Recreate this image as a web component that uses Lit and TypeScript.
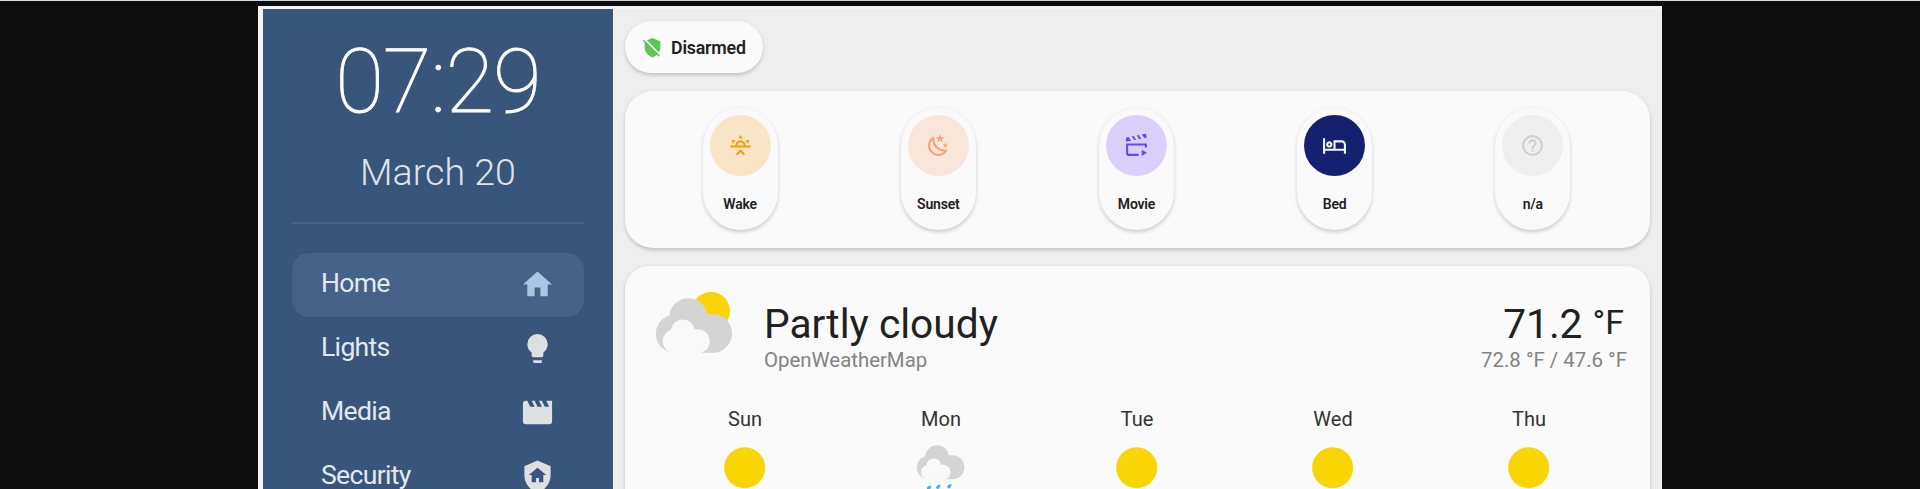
import { LitElement, html, css, svg } from "lit";
import { customElement } from "lit/decorators.js";

const ICONS: Record<string, string> = {
  home: "M10,20V14H14V20H19V12H22L12,3L2,12H5V20H10Z",
  bulb: "M12,2A7,7 0 0,0 5,9C5,11.38 6.19,13.47 8,14.74V17A1,1 0 0,0 9,18H15A1,1 0 0,0 16,17V14.74C17.81,13.47 19,11.38 19,9A7,7 0 0,0 12,2M9,21A1,1 0 0,0 10,22H14A1,1 0 0,0 15,21V20H9V21Z",
  movie: "M18,4L20,8H17L15,4H13L15,8H12L10,4H8L10,8H7L5,4H4A2,2 0 0,0 2,6V18A2,2 0 0,0 4,20H20A2,2 0 0,0 22,18V4H18Z",
  shieldHome: "M11,13H13V16H16V11H18L12,6L6,11H8V16H11V13M12,1L21,5V11C21,16.55 17.16,21.74 12,23C6.84,21.74 3,16.55 3,11V5L12,1Z",
  shieldOff: "M1,4.27L2.28,3L20.5,21.22L19.23,22.5L17,20.25C15.57,21.57 13.87,22.54 12,23C6.84,21.74 3,16.55 3,11V6.27L1,4.27M12,1L21,5V11C21,13.28 20.35,15.5 19.23,17.41L5.65,3.82L12,1Z",
  sunrise: "M3,12H7A5,5 0 0,1 12,7A5,5 0 0,1 17,12H21A1,1 0 0,1 22,13A1,1 0 0,1 21,14H3A1,1 0 0,1 2,13A1,1 0 0,1 3,12M15,12A3,3 0 0,0 12,9A3,3 0 0,0 9,12H15M12,2L14.39,5.42C13.65,5.15 12.84,5 12,5C11.16,5 10.35,5.15 9.61,5.42L12,2M3.34,7L7.5,6.65C6.9,7.16 6.36,7.78 5.94,8.5C5.5,9.24 5.25,10 5.11,10.79L3.34,7M20.65,7L18.88,10.79C18.74,10 18.47,9.23 18.05,8.5C17.63,7.78 17.1,7.15 16.5,6.64L20.65,7M12.71,16.3L15.82,19.41C16.21,19.8 16.21,20.43 15.82,20.82C15.43,21.21 14.8,21.21 14.41,20.82L12,18.41L9.59,20.82C9.2,21.21 8.57,21.21 8.18,20.82C7.79,20.43 7.79,19.8 8.18,19.41L11.29,16.3C11.5,16.1 11.74,16 12,16C12.26,16 12.5,16.1 12.71,16.3Z",
  night: "M17.75,4.09L15.22,6.03L16.13,9.09L13.5,7.28L10.87,9.09L11.78,6.03L9.25,4.09L12.44,4L13.5,1L14.56,4L17.75,4.09M21.25,11L19.61,12.25L20.2,14.23L18.5,13.06L16.8,14.23L17.39,12.25L15.75,11L17.81,10.95L18.5,9L19.19,10.95L21.25,11M18.97,15.95C19.8,15.87 20.69,17.05 20.16,17.8C19.84,18.25 19.5,18.67 19.08,19.07C15.17,23 8.84,23 4.94,19.07C1.03,15.17 1.03,8.83 4.94,4.93C5.34,4.53 5.76,4.17 6.21,3.85C6.96,3.32 8.14,4.21 8.06,5.04C7.79,7.9 8.75,10.87 10.95,13.06C13.14,15.26 16.1,16.22 18.97,15.95M17.33,17.97C14.5,17.81 11.7,16.64 9.53,14.5C7.36,12.31 6.2,9.5 6.04,6.68C3.23,9.82 3.34,14.64 6.35,17.66C9.37,20.67 14.19,20.78 17.33,17.97Z",
  moviePlay: "M2.2,8.3L1.8,6.4A2,2 0 0,1 3.4,4.1L4.4,3.9L6.8,7.4L2.2,8.3M7.3,3.3L9.3,2.9L11.7,6.4L9.8,6.8L7.3,3.3M12.2,2.4L14.2,2L16.6,5.5L14.7,5.9L12.2,2.4M17.1,1.4L21,0.6L21.9,4.5L19.6,4.9L17.1,1.4M2,10H22V14H20V12H4V20H14V22H4A2,2 0 0,1 2,20V10M17,16V22L22,19L17,16Z",
  bed: "M7 14C8.66 14 10 12.66 10 11C10 9.34 8.66 8 7 8C5.34 8 4 9.34 4 11C4 12.66 5.34 14 7 14M7 10C7.55 10 8 10.45 8 11C8 11.55 7.55 12 7 12C6.45 12 6 11.55 6 11C6 10.45 6.45 10 7 10M19 7H11V15H3V5H1V20H3V17H21V20H23V11C23 8.79 21.21 7 19 7M21 15H13V9H19C20.1 9 21 9.9 21 11Z",
  help: "M11,18H13V16H11V18M12,2A10,10 0 0,0 2,12A10,10 0 0,0 12,22A10,10 0 0,0 22,12A10,10 0 0,0 12,2M12,20C7.59,20 4,16.41 4,12C4,7.59 7.59,4 12,4C16.41,4 20,7.59 20,12C20,16.41 16.41,20 12,20M12,6A4,4 0 0,0 8,10H10A2,2 0 0,1 12,8A2,2 0 0,1 14,10C14,12 11,11.75 11,15H13C13,12.75 16,12.5 16,10A4,4 0 0,0 12,6Z",
};

const icon = (name: string) =>
  html`<svg class="icon" viewBox="0 0 24 24"><path d=${ICONS[name]} fill="currentColor"></path></svg>`;

const clouds = svg`
  <path class="cloud-back" d="m3.8863 5.035c-0.54892 0.16898-1.04 0.46637-1.4372 0.8636-0.63077 0.63041-1.0206 1.4933-1.0206 2.455 0 1.9251 1.5589 3.4682 3.4837 3.4682h6.9688c1.9251 0 3.484-1.5981 3.484-3.5232 0-1.9251-1.5589-3.5232-3.484-3.5232h-1.0834c-0.25294-1.6916-1.6986-2.9083-3.4463-2.9083-1.7995 0-3.2805 1.4153-3.465 3.1679"></path>
  <path class="cloud-front" d="m4.1996 7.6995c-0.33902 0.10407-0.64276 0.28787-0.88794 0.5334-0.39017 0.38982-0.63147 0.92322-0.63147 1.5176 0 1.1896 0.96414 2.1431 2.1537 2.1431h4.3071c1.1896 0 2.153-0.98742 2.153-2.1777 0-1.1896-0.96344-2.1777-2.153-2.1777h-0.66992c-0.15593-1.0449-1.0499-1.7974-2.1297-1.7974-1.112 0-2.0274 0.87524-2.1417 1.9586"></path>`;

const drop = (x: number, y: number) => svg`
  <path class="rain" transform="translate(${x} ${y})" d="m0 0c-0.22401 0.24765-0.57115 0.2988-0.77505 0.11395-0.20391-0.1845-0.18732-0.53481 0.036689-0.78281 0.14817-0.16298 0.59126-0.32914 0.87559-0.42369 0.12453-0.04092 0.22684 0.05186 0.19791 0.17956-0.065617 0.2921-0.18732 0.74965-0.33514 0.91299"></path>`;

const weather = (kind: string) => html`<svg class="sky" viewBox="0 0 17 17">
  ${kind === "sunny" ? svg`<circle class="sun" cx="8.4" cy="8.4" r="6"></circle>` : ""}
  ${kind === "partly" ? svg`<circle class="sun" cx="11.497" cy="4.211" r="3.484"></circle>${clouds}` : ""}
  ${kind === "rainy" ? svg`${clouds}${drop(5.29, 14.73)}${drop(7.99, 14.42)}${drop(11.26, 14.26)}${drop(8.43, 15.88)}` : ""}
</svg>`;

@customElement("app-root")
export class AppRoot extends LitElement {
  static styles = css`
    :host {
      display: block;
      height: 489px;
      overflow: hidden;
      box-sizing: border-box;
      background: #0d0d0d;
      border-top: 1px solid #d5dbd8;
      padding-top: 5px;
      font-family: Roboto, sans-serif;
      color: #212121;
    }
    * { box-sizing: border-box; }
    .icon { display: block; width: 100%; height: 100%; }
    .frame {
      width: 1404px;
      height: 600px;
      margin-left: 258px;
      display: flex;
      background: #eee;
      border: solid #f4f4f4;
      border-width: 3px 0 0 5px;
    }
    .side {
      flex: 0 0 350px;
      background: #38557c;
      padding: 0 29px;
      color: #fff;
      display: flex;
      flex-direction: column;
    }
    .time {
      font-size: 89px;
      font-weight: 100;
      line-height: 100px;
      margin-top: 23px;
      text-align: center;
      letter-spacing: -1px;
      -webkit-text-stroke: 0.8px #fff;
    }
    .date {
      font-size: 37.6px;
      font-weight: 300;
      line-height: 48px;
      margin-top: 16px;
      text-align: center;
      color: #dfe4ea;
    }
    .rule { height: 2px; margin-top: 26px; background: #4a658a; }
    .nav { margin-top: 29px; display: flex; flex-direction: column; }
    .item {
      height: 63.8px;
      border-radius: 17px;
      padding: 0 29px 0 29px;
      display: flex;
      align-items: center;
      justify-content: space-between;
      font-size: 26.6px;
      font-weight: 400;
      letter-spacing: -0.7px;
      color: #e4e8ed;
    }
    .item.on { background: #456288; }
    .name { padding-bottom: 4px; }
    .glyph { width: 35px; height: 35px; color: #dce0e1; }
    .on .glyph { color: #a9c7e5; }
    .main {
      flex: 1;
      padding: 12px 12px 0 12px;
      display: flex;
      flex-direction: column;
      align-items: stretch;
    }
    .chip, .card, .scene {
      background: #fafafa;
      box-shadow: 0 3px 4px -1px rgba(0, 0, 0, 0.14), 0 1px 5px rgba(0, 0, 0, 0.09);
    }
    .chip {
      align-self: flex-start;
      width: 138px;
      height: 52px;
      border-radius: 26px;
      padding-left: 17px;
      display: flex;
      align-items: center;
      gap: 8px;
      font-size: 17.8px;
      font-weight: 600;
      letter-spacing: -0.2px;
    }
    .shield { width: 21px; height: 21px; color: #5ac653; }
    .scenes {
      height: 157px;
      margin-top: 18px;
      border-radius: 28px;
      padding: 17px 18px 0 16px;
      display: grid;
      grid-template-columns: repeat(5, 1fr);
      justify-items: center;
    }
    .scene {
      width: 75px;
      height: 122px;
      border-radius: 38px;
      padding-top: 7px;
      display: flex;
      flex-direction: column;
      align-items: center;
    }
    .disc { width: 61px; height: 61px; border-radius: 50%; padding: 18px; }
    .wake { background: #f8e5c5; color: #f39c0c; }
    .sunset { background: #f8e6db; color: #f4a174; }
    .film { background: #d9d0fd; color: #6644ff; }
    .sleep { background: #152070; color: #f3f4fa; }
    .none { background: #efefef; color: #cdcdcd; }
    .label { margin-top: 18px; font-size: 14px; line-height: 20px; font-weight: 600; letter-spacing: -0.2px; }
    .forecast { flex: 1; margin-top: 18px; border-radius: 24px; padding: 22px 23px 0 22px; }
    .now { display: flex; align-items: flex-start; }
    .big { width: 93px; height: 93px; margin-left: 1px; }
    .words { margin: 12px 0 0 23px; flex: 1; }
    .state { font-size: 40.7px; line-height: 48px; white-space: nowrap; }
    .sub { font-size: 20.4px; line-height: 24px; color: #838383; }
    .temps { margin-top: 12px; text-align: right; }
    .unit { font-size: 34px; vertical-align: 4px; line-height: 1; margin-left: 10px; margin-right: 3px; }
    .days { display: grid; grid-template-columns: repeat(5, 196px); justify-items: center; margin-top: 26px; }
    .day { display: flex; flex-direction: column; align-items: center; font-size: 20px; line-height: 24px; color: #333; gap: 8px; }
    .small { width: 58px; height: 58px; }
    .sky { display: block; width: 100%; height: 100%; overflow: visible; }
    .sun { fill: #fad504; }
    .cloud-back { fill: #d4d4d4; }
    .cloud-front { fill: #f9f9f9; }
    .rain { fill: #30b3ff; }
  `;

  private nav = [["Home", "home"], ["Lights", "bulb"], ["Media", "movie"], ["Security", "shieldHome"]];
  private scenes = [
    ["Wake", "sunrise", "wake"], ["Sunset", "night", "sunset"], ["Movie", "moviePlay", "film"],
    ["Bed", "bed", "sleep"], ["n/a", "help", "none"],
  ];
  private days = [["Sun", "sunny"], ["Mon", "rainy"], ["Tue", "sunny"], ["Wed", "sunny"], ["Thu", "sunny"]];

  render() {
    return html`<div class="frame">
      <aside class="side">
        <div class="time">07:29</div>
        <div class="date">March 20</div>
        <div class="rule"></div>
        <nav class="nav">
          ${this.nav.map(([name, glyph], i) => html`<div class="item ${i === 0 ? "on" : ""}">
            <span class="name">${name}</span><span class="glyph">${icon(glyph)}</span>
          </div>`)}
        </nav>
      </aside>
      <main class="main">
        <div class="chip"><span class="shield">${icon("shieldOff")}</span><span>Disarmed</span></div>
        <section class="card scenes">
          ${this.scenes.map(([name, glyph, tone]) => html`<div class="scene">
            <div class="disc ${tone}">${icon(glyph)}</div><div class="label">${name}</div>
          </div>`)}
        </section>
        <section class="card forecast">
          <div class="now">
            <div class="big">${weather("partly")}</div>
            <div class="words"><div class="state">Partly cloudy</div><div class="sub">OpenWeatherMap</div></div>
            <div class="temps">
              <div class="state">71.2<span class="unit">°F</span></div>
              <div class="sub">72.8 °F / 47.6 °F</div>
            </div>
          </div>
          <div class="days">
            ${this.days.map(([name, kind]) => html`<div class="day">
              <span>${name}</span><div class="small">${weather(kind)}</div>
            </div>`)}
          </div>
        </section>
      </main>
    </div>`;
  }
}
